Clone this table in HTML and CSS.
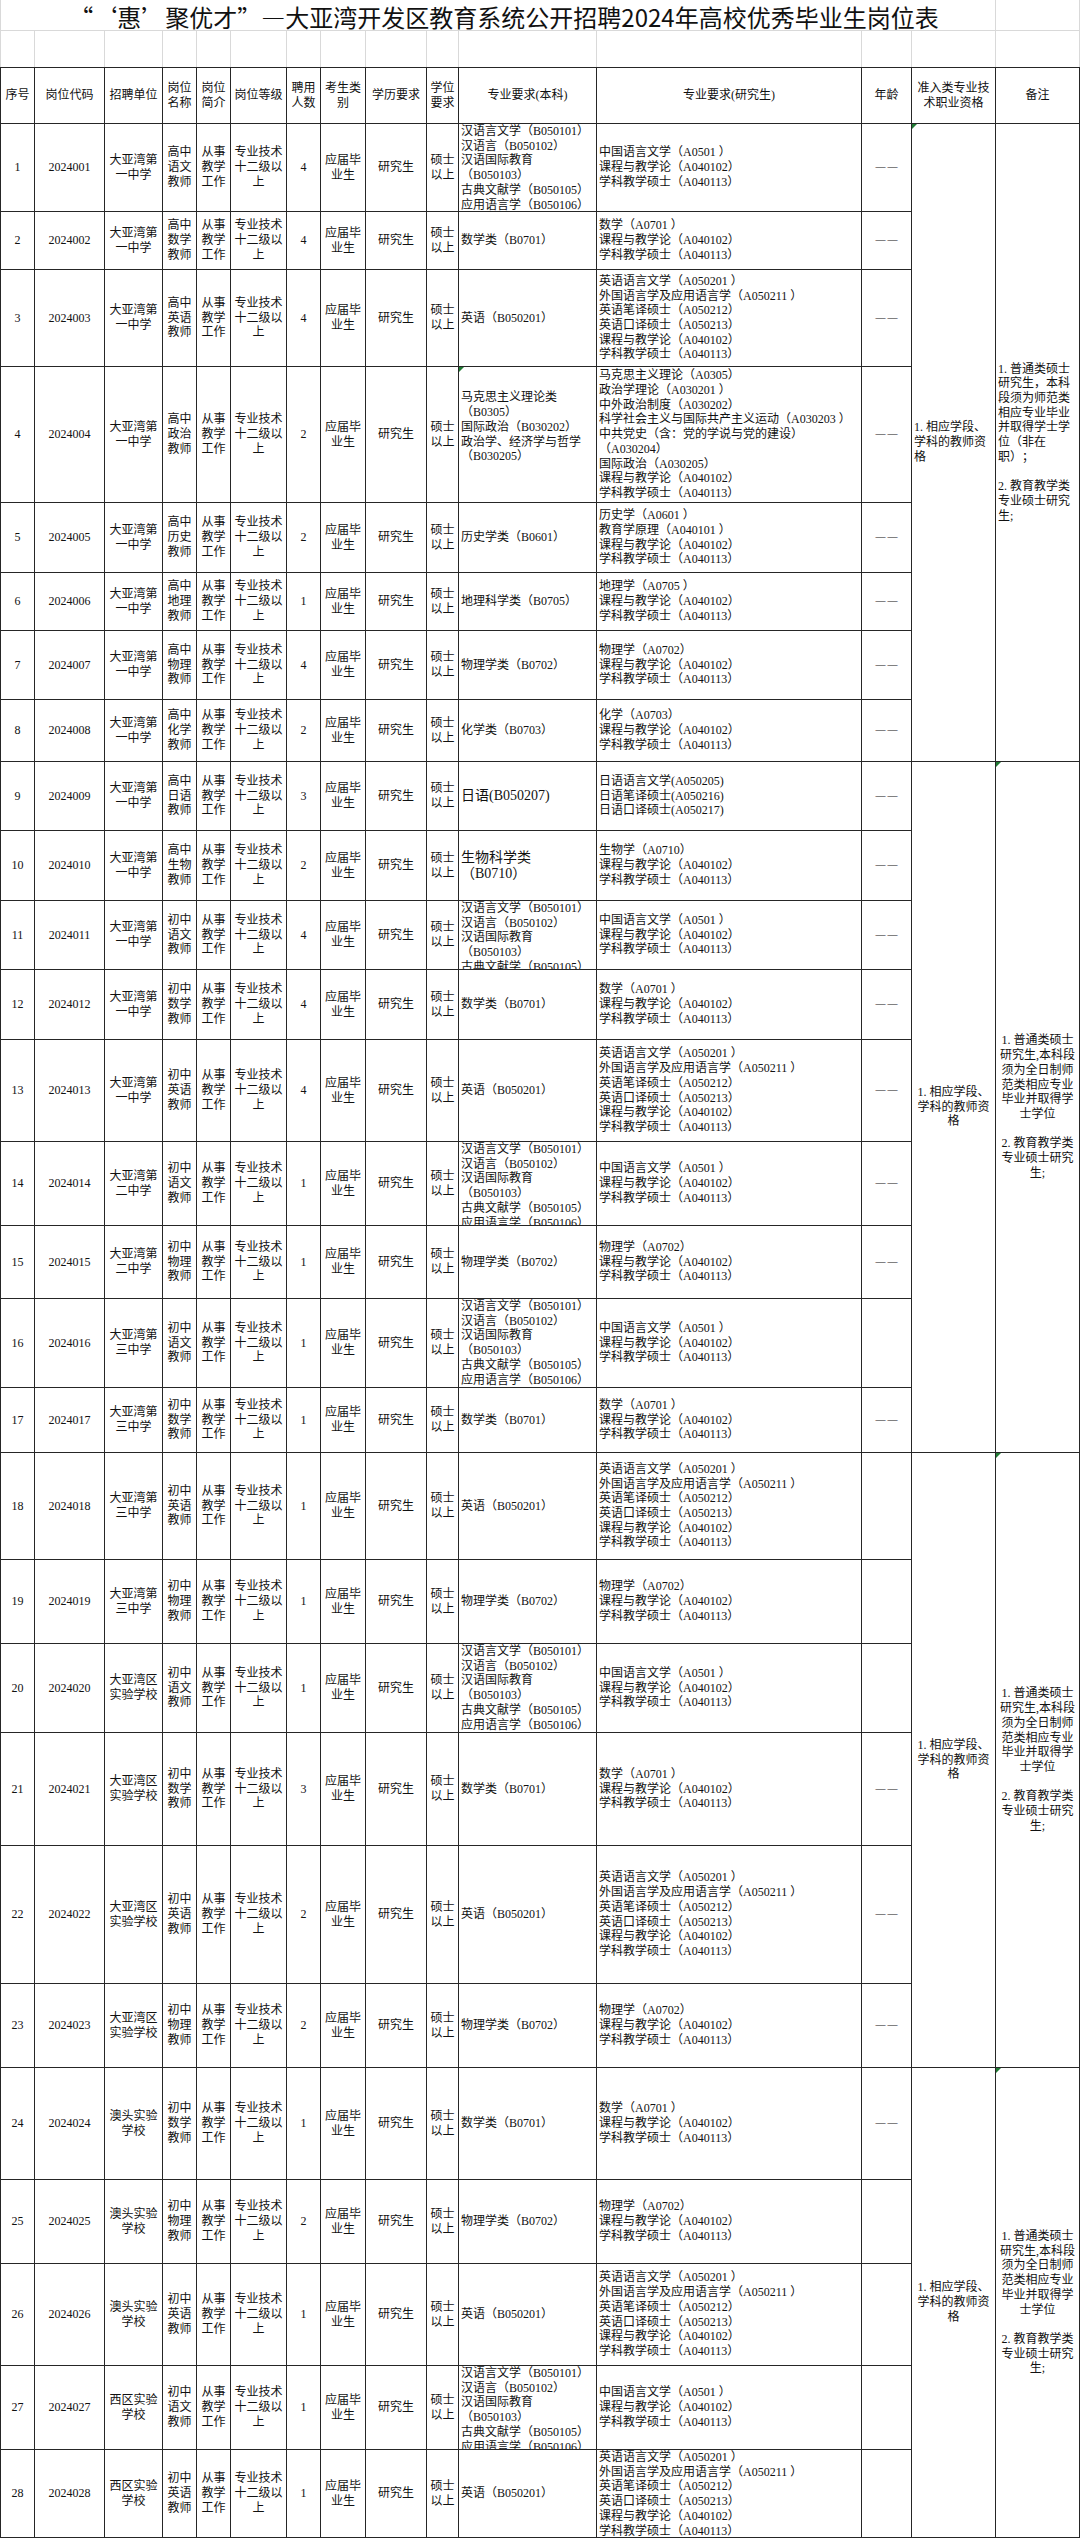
FILE: index.html
```html
<!DOCTYPE html>
<html lang="zh-CN">
<head>
<meta charset="utf-8">
<title>“‘惠’聚优才”—大亚湾开发区教育系统公开招聘2024年高校优秀毕业生岗位表</title>
<link rel="stylesheet" href="styles.css">
</head>
<body>
<div class="top">
  <div class="title"><span>“‘惠’聚优才”—大亚湾开发区教育系统公开招聘2024年高校优秀毕业生岗位表</span></div>
  <div></div>
  <div></div><div></div><div></div><div></div><div></div><div></div><div></div><div></div><div></div><div></div><div></div><div></div><div></div><div></div><div></div>
</div>
<div class="sheet">
  <div class="c">序号</div><div class="c">岗位代码</div><div class="c">招聘单位</div><div class="c">岗位名称</div><div class="c">岗位简介</div><div class="c">岗位等级</div><div class="c">聘用人数</div><div class="c">考生类别</div><div class="c">学历要求</div><div class="c">学位要求</div><div class="c">专业要求(本科)</div><div class="c">专业要求(研究生)</div><div class="c">年龄</div><div class="c">准入类专业技术职业资格</div><div class="c">备注</div>

  <!-- 1 -->
  <div class="c">1</div><div class="c">2024001</div><div class="c">大亚湾第一中学</div><div class="c">高中语文教师</div><div class="c">从事教学工作</div><div class="c">专业技术十二级以上</div><div class="c">4</div><div class="c">应届毕业生</div><div class="c">研究生</div><div class="c">硕士以上</div>
  <div class="c l"><p>汉语言文学（B050101）<br>汉语言（B050102）<br>汉语国际教育（B050103）<br>古典文献学（B050105）<br>应用语言学（B050106）</p></div>
  <div class="c l"><p>中国语言文学（A0501 ）<br>课程与教学论（A040102）<br>学科教学硕士（A040113）</p></div>
  <div class="c"><span class="dash">——</span></div>
  <div class="c l g1 flag"><p>1. 相应学段、学科的教师资格</p></div>
  <div class="c l g1"><p>1. 普通类硕士研究生，本科段须为师范类相应专业毕业并取得学士学位（非在职）；<br><br>2. 教育教学类专业硕士研究生;</p></div>

  <!-- 2 -->
  <div class="c">2</div><div class="c">2024002</div><div class="c">大亚湾第一中学</div><div class="c">高中数学教师</div><div class="c">从事教学工作</div><div class="c">专业技术十二级以上</div><div class="c">4</div><div class="c">应届毕业生</div><div class="c">研究生</div><div class="c">硕士以上</div>
  <div class="c l"><p>数学类（B0701）</p></div>
  <div class="c l"><p>数学（A0701 ）<br>课程与教学论（A040102）<br>学科教学硕士（A040113）</p></div>
  <div class="c"><span class="dash">——</span></div>

  <!-- 3 -->
  <div class="c">3</div><div class="c">2024003</div><div class="c">大亚湾第一中学</div><div class="c">高中英语教师</div><div class="c">从事教学工作</div><div class="c">专业技术十二级以上</div><div class="c">4</div><div class="c">应届毕业生</div><div class="c">研究生</div><div class="c">硕士以上</div>
  <div class="c l"><p>英语（B050201）</p></div>
  <div class="c l"><p>英语语言文学（A050201 ）<br>外国语言学及应用语言学（A050211 ）<br>英语笔译硕士（A050212）<br>英语口译硕士（A050213）<br>课程与教学论（A040102）<br>学科教学硕士（A040113）</p></div>
  <div class="c"><span class="dash">——</span></div>

  <!-- 4 -->
  <div class="c">4</div><div class="c">2024004</div><div class="c">大亚湾第一中学</div><div class="c">高中政治教师</div><div class="c">从事教学工作</div><div class="c">专业技术十二级以上</div><div class="c">2</div><div class="c">应届毕业生</div><div class="c">研究生</div><div class="c">硕士以上</div>
  <div class="c l flag"><p>马克思主义理论类（B0305）<br>国际政治（B030202）<br>政治学、经济学与哲学（B030205）<br><br></p></div>
  <div class="c l"><p>马克思主义理论（A0305）<br>政治学理论（A030201 ）<br>中外政治制度（A030202）<br>科学社会主义与国际共产主义运动（A030203 ）<br>中共党史（含：党的学说与党的建设）（A030204）<br>国际政治（A030205）<br>课程与教学论（A040102）<br>学科教学硕士（A040113）</p></div>
  <div class="c"><span class="dash">——</span></div>

  <!-- 5 -->
  <div class="c">5</div><div class="c">2024005</div><div class="c">大亚湾第一中学</div><div class="c">高中历史教师</div><div class="c">从事教学工作</div><div class="c">专业技术十二级以上</div><div class="c">2</div><div class="c">应届毕业生</div><div class="c">研究生</div><div class="c">硕士以上</div>
  <div class="c l"><p>历史学类（B0601）</p></div>
  <div class="c l"><p>历史学（A0601 ）<br>教育学原理（A040101 ）<br>课程与教学论（A040102）<br>学科教学硕士（A040113）</p></div>
  <div class="c"><span class="dash">——</span></div>

  <!-- 6 -->
  <div class="c">6</div><div class="c">2024006</div><div class="c">大亚湾第一中学</div><div class="c">高中地理教师</div><div class="c">从事教学工作</div><div class="c">专业技术十二级以上</div><div class="c">1</div><div class="c">应届毕业生</div><div class="c">研究生</div><div class="c">硕士以上</div>
  <div class="c l"><p>地理科学类（B0705）</p></div>
  <div class="c l"><p>地理学（A0705 ）<br>课程与教学论（A040102）<br>学科教学硕士（A040113）</p></div>
  <div class="c"><span class="dash">——</span></div>

  <!-- 7 -->
  <div class="c">7</div><div class="c">2024007</div><div class="c">大亚湾第一中学</div><div class="c">高中物理教师</div><div class="c">从事教学工作</div><div class="c">专业技术十二级以上</div><div class="c">4</div><div class="c">应届毕业生</div><div class="c">研究生</div><div class="c">硕士以上</div>
  <div class="c l"><p>物理学类（B0702）</p></div>
  <div class="c l"><p>物理学（A0702）<br>课程与教学论（A040102）<br>学科教学硕士（A040113）</p></div>
  <div class="c"><span class="dash">——</span></div>

  <!-- 8 -->
  <div class="c">8</div><div class="c">2024008</div><div class="c">大亚湾第一中学</div><div class="c">高中化学教师</div><div class="c">从事教学工作</div><div class="c">专业技术十二级以上</div><div class="c">2</div><div class="c">应届毕业生</div><div class="c">研究生</div><div class="c">硕士以上</div>
  <div class="c l"><p>化学类（B0703）</p></div>
  <div class="c l"><p>化学（A0703）<br>课程与教学论（A040102）<br>学科教学硕士（A040113）</p></div>
  <div class="c"><span class="dash">——</span></div>

  <!-- 9 -->
  <div class="c">9</div><div class="c">2024009</div><div class="c">大亚湾第一中学</div><div class="c">高中日语教师</div><div class="c">从事教学工作</div><div class="c">专业技术十二级以上</div><div class="c">3</div><div class="c">应届毕业生</div><div class="c">研究生</div><div class="c">硕士以上</div>
  <div class="c l big"><p>日语(B050207)</p></div>
  <div class="c l"><p>日语语言文学(A050205)<br>日语笔译硕士(A050216)<br>日语口译硕士(A050217)</p></div>
  <div class="c"><span class="dash">——</span></div>
  <div class="c m g2"><p>1. 相应学段、学科的教师资格</p></div>
  <div class="c m g2 flag"><p>1. 普通类硕士研究生,本科段须为全日制师范类相应专业毕业并取得学士学位<br><br>2. 教育教学类专业硕士研究生;</p></div>

  <!-- 10 -->
  <div class="c">10</div><div class="c">2024010</div><div class="c">大亚湾第一中学</div><div class="c">高中生物教师</div><div class="c">从事教学工作</div><div class="c">专业技术十二级以上</div><div class="c">2</div><div class="c">应届毕业生</div><div class="c">研究生</div><div class="c">硕士以上</div>
  <div class="c l big"><p>生物科学类<br>（B0710）</p></div>
  <div class="c l"><p>生物学（A0710）<br>课程与教学论（A040102）<br>学科教学硕士（A040113）</p></div>
  <div class="c"><span class="dash">——</span></div>

  <!-- 11 -->
  <div class="c">11</div><div class="c">2024011</div><div class="c">大亚湾第一中学</div><div class="c">初中语文教师</div><div class="c">从事教学工作</div><div class="c">专业技术十二级以上</div><div class="c">4</div><div class="c">应届毕业生</div><div class="c">研究生</div><div class="c">硕士以上</div>
  <div class="c l"><p>汉语言文学（B050101）<br>汉语言（B050102）<br>汉语国际教育（B050103）<br>古典文献学（B050105）<br>应用语言学（B050106）</p></div>
  <div class="c l"><p>中国语言文学（A0501 ）<br>课程与教学论（A040102）<br>学科教学硕士（A040113）</p></div>
  <div class="c"><span class="dash">——</span></div>

  <!-- 12 -->
  <div class="c">12</div><div class="c">2024012</div><div class="c">大亚湾第一中学</div><div class="c">初中数学教师</div><div class="c">从事教学工作</div><div class="c">专业技术十二级以上</div><div class="c">4</div><div class="c">应届毕业生</div><div class="c">研究生</div><div class="c">硕士以上</div>
  <div class="c l"><p>数学类（B0701）</p></div>
  <div class="c l"><p>数学（A0701 ）<br>课程与教学论（A040102）<br>学科教学硕士（A040113）</p></div>
  <div class="c"><span class="dash">——</span></div>

  <!-- 13 -->
  <div class="c">13</div><div class="c">2024013</div><div class="c">大亚湾第一中学</div><div class="c">初中英语教师</div><div class="c">从事教学工作</div><div class="c">专业技术十二级以上</div><div class="c">4</div><div class="c">应届毕业生</div><div class="c">研究生</div><div class="c">硕士以上</div>
  <div class="c l"><p>英语（B050201）</p></div>
  <div class="c l"><p>英语语言文学（A050201 ）<br>外国语言学及应用语言学（A050211 ）<br>英语笔译硕士（A050212）<br>英语口译硕士（A050213）<br>课程与教学论（A040102）<br>学科教学硕士（A040113）</p></div>
  <div class="c"><span class="dash">——</span></div>

  <!-- 14 -->
  <div class="c">14</div><div class="c">2024014</div><div class="c">大亚湾第二中学</div><div class="c">初中语文教师</div><div class="c">从事教学工作</div><div class="c">专业技术十二级以上</div><div class="c">1</div><div class="c">应届毕业生</div><div class="c">研究生</div><div class="c">硕士以上</div>
  <div class="c l"><p>汉语言文学（B050101）<br>汉语言（B050102）<br>汉语国际教育（B050103）<br>古典文献学（B050105）<br>应用语言学（B050106）</p></div>
  <div class="c l"><p>中国语言文学（A0501 ）<br>课程与教学论（A040102）<br>学科教学硕士（A040113）</p></div>
  <div class="c"><span class="dash">——</span></div>

  <!-- 15 -->
  <div class="c">15</div><div class="c">2024015</div><div class="c">大亚湾第二中学</div><div class="c">初中物理教师</div><div class="c">从事教学工作</div><div class="c">专业技术十二级以上</div><div class="c">1</div><div class="c">应届毕业生</div><div class="c">研究生</div><div class="c">硕士以上</div>
  <div class="c l"><p>物理学类（B0702）</p></div>
  <div class="c l"><p>物理学（A0702）<br>课程与教学论（A040102）<br>学科教学硕士（A040113）</p></div>
  <div class="c"><span class="dash">——</span></div>

  <!-- 16 -->
  <div class="c">16</div><div class="c">2024016</div><div class="c">大亚湾第三中学</div><div class="c">初中语文教师</div><div class="c">从事教学工作</div><div class="c">专业技术十二级以上</div><div class="c">1</div><div class="c">应届毕业生</div><div class="c">研究生</div><div class="c">硕士以上</div>
  <div class="c l"><p>汉语言文学（B050101）<br>汉语言（B050102）<br>汉语国际教育（B050103）<br>古典文献学（B050105）<br>应用语言学（B050106）</p></div>
  <div class="c l"><p>中国语言文学（A0501 ）<br>课程与教学论（A040102）<br>学科教学硕士（A040113）</p></div>
  <div class="c"></div>

  <!-- 17 -->
  <div class="c">17</div><div class="c">2024017</div><div class="c">大亚湾第三中学</div><div class="c">初中数学教师</div><div class="c">从事教学工作</div><div class="c">专业技术十二级以上</div><div class="c">1</div><div class="c">应届毕业生</div><div class="c">研究生</div><div class="c">硕士以上</div>
  <div class="c l"><p>数学类（B0701）</p></div>
  <div class="c l"><p>数学（A0701 ）<br>课程与教学论（A040102）<br>学科教学硕士（A040113）</p></div>
  <div class="c"><span class="dash">——</span></div>

  <!-- 18 -->
  <div class="c">18</div><div class="c">2024018</div><div class="c">大亚湾第三中学</div><div class="c">初中英语教师</div><div class="c">从事教学工作</div><div class="c">专业技术十二级以上</div><div class="c">1</div><div class="c">应届毕业生</div><div class="c">研究生</div><div class="c">硕士以上</div>
  <div class="c l"><p>英语（B050201）</p></div>
  <div class="c l"><p>英语语言文学（A050201 ）<br>外国语言学及应用语言学（A050211 ）<br>英语笔译硕士（A050212）<br>英语口译硕士（A050213）<br>课程与教学论（A040102）<br>学科教学硕士（A040113）</p></div>
  <div class="c"></div>
  <div class="c m g3"><p>1. 相应学段、学科的教师资格</p></div>
  <div class="c m g3 flag"><p>1. 普通类硕士研究生,本科段须为全日制师范类相应专业毕业并取得学士学位<br><br>2. 教育教学类专业硕士研究生;</p></div>

  <!-- 19 -->
  <div class="c">19</div><div class="c">2024019</div><div class="c">大亚湾第三中学</div><div class="c">初中物理教师</div><div class="c">从事教学工作</div><div class="c">专业技术十二级以上</div><div class="c">1</div><div class="c">应届毕业生</div><div class="c">研究生</div><div class="c">硕士以上</div>
  <div class="c l"><p>物理学类（B0702）</p></div>
  <div class="c l"><p>物理学（A0702）<br>课程与教学论（A040102）<br>学科教学硕士（A040113）</p></div>
  <div class="c"></div>

  <!-- 20 -->
  <div class="c">20</div><div class="c">2024020</div><div class="c">大亚湾区实验学校</div><div class="c">初中语文教师</div><div class="c">从事教学工作</div><div class="c">专业技术十二级以上</div><div class="c">1</div><div class="c">应届毕业生</div><div class="c">研究生</div><div class="c">硕士以上</div>
  <div class="c l"><p>汉语言文学（B050101）<br>汉语言（B050102）<br>汉语国际教育（B050103）<br>古典文献学（B050105）<br>应用语言学（B050106）</p></div>
  <div class="c l"><p>中国语言文学（A0501 ）<br>课程与教学论（A040102）<br>学科教学硕士（A040113）</p></div>
  <div class="c"></div>

  <!-- 21 -->
  <div class="c">21</div><div class="c">2024021</div><div class="c">大亚湾区实验学校</div><div class="c">初中数学教师</div><div class="c">从事教学工作</div><div class="c">专业技术十二级以上</div><div class="c">3</div><div class="c">应届毕业生</div><div class="c">研究生</div><div class="c">硕士以上</div>
  <div class="c l"><p>数学类（B0701）</p></div>
  <div class="c l"><p>数学（A0701 ）<br>课程与教学论（A040102）<br>学科教学硕士（A040113）</p></div>
  <div class="c"><span class="dash">——</span></div>

  <!-- 22 -->
  <div class="c">22</div><div class="c">2024022</div><div class="c">大亚湾区实验学校</div><div class="c">初中英语教师</div><div class="c">从事教学工作</div><div class="c">专业技术十二级以上</div><div class="c">2</div><div class="c">应届毕业生</div><div class="c">研究生</div><div class="c">硕士以上</div>
  <div class="c l"><p>英语（B050201）</p></div>
  <div class="c l"><p>英语语言文学（A050201 ）<br>外国语言学及应用语言学（A050211 ）<br>英语笔译硕士（A050212）<br>英语口译硕士（A050213）<br>课程与教学论（A040102）<br>学科教学硕士（A040113）</p></div>
  <div class="c"><span class="dash">——</span></div>

  <!-- 23 -->
  <div class="c">23</div><div class="c">2024023</div><div class="c">大亚湾区实验学校</div><div class="c">初中物理教师</div><div class="c">从事教学工作</div><div class="c">专业技术十二级以上</div><div class="c">2</div><div class="c">应届毕业生</div><div class="c">研究生</div><div class="c">硕士以上</div>
  <div class="c l"><p>物理学类（B0702）</p></div>
  <div class="c l"><p>物理学（A0702）<br>课程与教学论（A040102）<br>学科教学硕士（A040113）</p></div>
  <div class="c"><span class="dash">——</span></div>

  <!-- 24 -->
  <div class="c">24</div><div class="c">2024024</div><div class="c">澳头实验学校</div><div class="c">初中数学教师</div><div class="c">从事教学工作</div><div class="c">专业技术十二级以上</div><div class="c">1</div><div class="c">应届毕业生</div><div class="c">研究生</div><div class="c">硕士以上</div>
  <div class="c l"><p>数学类（B0701）</p></div>
  <div class="c l"><p>数学（A0701 ）<br>课程与教学论（A040102）<br>学科教学硕士（A040113）</p></div>
  <div class="c"><span class="dash">——</span></div>
  <div class="c m g4"><p>1. 相应学段、学科的教师资格</p></div>
  <div class="c m g4 flag"><p>1. 普通类硕士研究生,本科段须为全日制师范类相应专业毕业并取得学士学位<br><br>2. 教育教学类专业硕士研究生;</p></div>

  <!-- 25 -->
  <div class="c">25</div><div class="c">2024025</div><div class="c">澳头实验学校</div><div class="c">初中物理教师</div><div class="c">从事教学工作</div><div class="c">专业技术十二级以上</div><div class="c">2</div><div class="c">应届毕业生</div><div class="c">研究生</div><div class="c">硕士以上</div>
  <div class="c l"><p>物理学类（B0702）</p></div>
  <div class="c l"><p>物理学（A0702）<br>课程与教学论（A040102）<br>学科教学硕士（A040113）</p></div>
  <div class="c"></div>

  <!-- 26 -->
  <div class="c">26</div><div class="c">2024026</div><div class="c">澳头实验学校</div><div class="c">初中英语教师</div><div class="c">从事教学工作</div><div class="c">专业技术十二级以上</div><div class="c">1</div><div class="c">应届毕业生</div><div class="c">研究生</div><div class="c">硕士以上</div>
  <div class="c l"><p>英语（B050201）</p></div>
  <div class="c l"><p>英语语言文学（A050201 ）<br>外国语言学及应用语言学（A050211 ）<br>英语笔译硕士（A050212）<br>英语口译硕士（A050213）<br>课程与教学论（A040102）<br>学科教学硕士（A040113）</p></div>
  <div class="c"></div>

  <!-- 27 -->
  <div class="c">27</div><div class="c">2024027</div><div class="c">西区实验学校</div><div class="c">初中语文教师</div><div class="c">从事教学工作</div><div class="c">专业技术十二级以上</div><div class="c">1</div><div class="c">应届毕业生</div><div class="c">研究生</div><div class="c">硕士以上</div>
  <div class="c l"><p>汉语言文学（B050101）<br>汉语言（B050102）<br>汉语国际教育（B050103）<br>古典文献学（B050105）<br>应用语言学（B050106）</p></div>
  <div class="c l"><p>中国语言文学（A0501 ）<br>课程与教学论（A040102）<br>学科教学硕士（A040113）</p></div>
  <div class="c"></div>

  <!-- 28 -->
  <div class="c">28</div><div class="c">2024028</div><div class="c">西区实验学校</div><div class="c">初中英语教师</div><div class="c">从事教学工作</div><div class="c">专业技术十二级以上</div><div class="c">1</div><div class="c">应届毕业生</div><div class="c">研究生</div><div class="c">硕士以上</div>
  <div class="c l"><p>英语（B050201）</p></div>
  <div class="c l"><p>英语语言文学（A050201 ）<br>外国语言学及应用语言学（A050211 ）<br>英语笔译硕士（A050212）<br>英语口译硕士（A050213）<br>课程与教学论（A040102）<br>学科教学硕士（A040113）</p></div>
  <div class="c"></div>
</div>
</body>
</html>
```

FILE: styles.css
```css
* {
  box-sizing: border-box;
}

html,
body {
  margin: 0;
  padding: 0;
  background: #fff;
}

body {
  width: 1080px;
  font-family: "Liberation Serif", "Noto Sans CJK SC", serif;
  font-size: 12px;
  line-height: 14.7px;
  color: #111;
  text-spacing-trim: space-all;
}

.top {
  display: grid;
  grid-template-columns: 33px 69px 57px 33px 33px 55px 33px 44px 60px 31px 137px 264px 49px 83px 83px;
  grid-template-rows: 30px 36px;
  gap: 1px;
  padding: 0 1px;
  background: #d9d9d9;
}

.top > div {
  background: #fff;
}

.top .title {
  grid-column: 1 / 15;
  display: flex;
  align-items: center;
  justify-content: center;
  padding: 4px 0 0 12px;
  font-family: "Noto Sans CJK SC", sans-serif;
  font-size: 24px;
  line-height: 26px;
  color: #111;
  white-space: nowrap;
}

.sheet {
  display: grid;
  grid-template-columns: 33px 69px 57px 33px 33px 55px 33px 44px 60px 31px 137px 264px 49px 83px 83px;
  grid-template-rows: 55px 87px 57px 96px 135px 69px 57px 68px 61px 68px 69px 68px 69px 101px 83px 72px 88px 64px 106px 83px 88px 112px 137px 83px 111px 83px 101px 83px 87px;
  gap: 1px;
  padding: 1px;
  background: #262626;
}

.c {
  position: relative;
  display: flex;
  align-items: center;
  justify-content: center;
  min-width: 0;
  min-height: 0;
  padding: 0 2px;
  overflow: hidden;
  background: #fff;
  text-align: center;
}

.c > p {
  margin: auto 0;
  width: 100%;
}

.l {
  justify-content: flex-start;
  text-align: left;
}

.m {
  text-align: center;
}

.big {
  font-size: 14px;
  line-height: 16px;
}

.g1 {
  grid-row: span 8;
}

.g2 {
  grid-row: span 9;
}

.g3 {
  grid-row: span 6;
}

.g4 {
  grid-row: span 5;
}

.dash {
  font-family: "Liberation Serif", serif;
  font-size: 10px;
  letter-spacing: 2px;
  margin-left: 2px;
}

.flag::before {
  content: "";
  position: absolute;
  left: 0;
  top: 0;
  border-top: 5px solid #1f7a33;
  border-right: 5px solid transparent;
}
```
